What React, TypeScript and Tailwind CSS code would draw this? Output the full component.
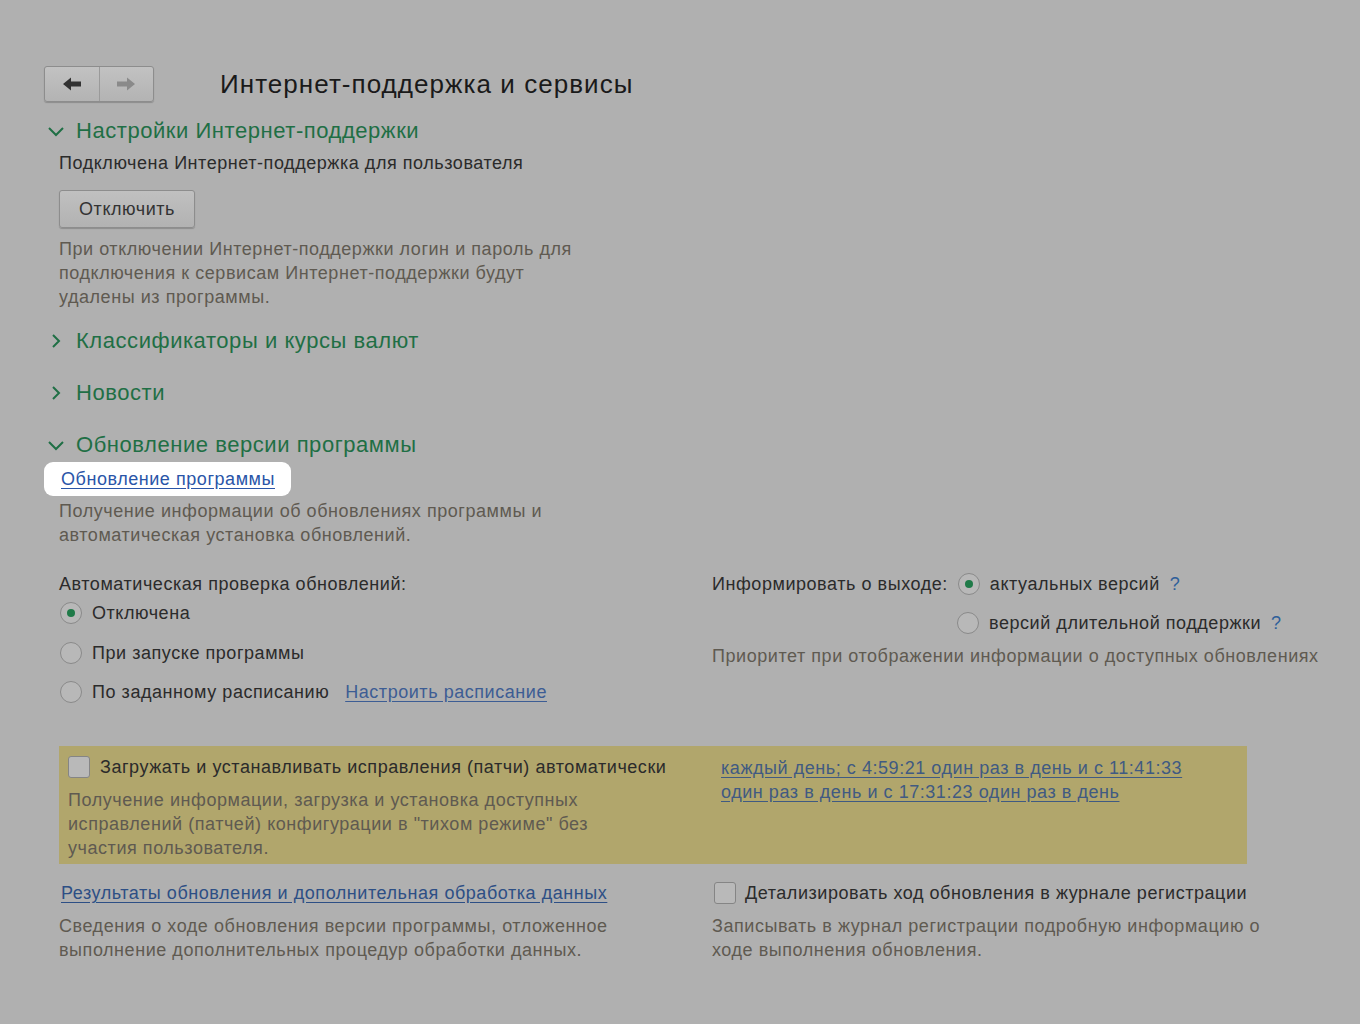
import React from "react";

const Radio = ({ checked }: { checked?: boolean }) => (
  <span className="inline-flex h-[22px] w-[22px] shrink-0 items-center justify-center rounded-full border border-[#8a8a8a] bg-[#b8b8b8]">
    {checked && <span className="h-[8px] w-[8px] rounded-full bg-[#1f7a48]" />}
  </span>
);

const Checkbox = () => (
  <span className="inline-block h-[22px] w-[22px] shrink-0 rounded-[3px] border border-[#858585] bg-[#b9b9b9]" />
);

const Chevron = ({ open }: { open: boolean }) => (
  <svg width="20" height="20" viewBox="0 0 20 20" className="shrink-0">
    {open ? (
      <path d="M3 7 L10 14 L17 7" fill="none" stroke="#1f6f45" strokeWidth="2" />
    ) : (
      <path d="M7 4 L13 10 L7 16" fill="none" stroke="#1f6f45" strokeWidth="2" />
    )}
  </svg>
);

export default function App() {
  return (
    <div
      className="min-h-[1024px] w-[1360px] bg-[#b0b0b0] text-[18px] tracking-[0.55px] text-[#2b2b2b]"
      style={{ fontFamily: '"Liberation Sans", Arial, sans-serif' }}
    >
      <div className="pl-[44px] pt-[66px]">
        {/* Header */}
        <div className="flex items-center">
          <div className="flex h-[36px] w-[110px] overflow-hidden rounded-[3px] border border-[#8d8d8d] bg-gradient-to-b from-[#c2c2c2] to-[#b3b3b3] shadow-[0_1px_1px_rgba(0,0,0,0.2)]">
            <div className="flex flex-1 items-center justify-center border-r border-[#9a9a9a]">
              <svg width="22" height="16" viewBox="0 0 22 16">
                <path d="M2 8 L10 1.5 L10 5.5 L20 5.5 L20 10.5 L10 10.5 L10 14.5 Z" fill="#333" />
              </svg>
            </div>
            <div className="flex flex-1 items-center justify-center">
              <svg width="22" height="16" viewBox="0 0 22 16">
                <path d="M20 8 L12 1.5 L12 5.5 L2 5.5 L2 10.5 L12 10.5 L12 14.5 Z" fill="#8a8a8a" />
              </svg>
            </div>
          </div>
          <h1 className="ml-[66px] text-[26px] leading-none tracking-[1.05px] text-[#1a1a1a]">Интернет-поддержка и сервисы</h1>
        </div>

        {/* Section 1 */}
        <div className="mt-[15px] flex items-center gap-[10px] pl-[2px]">
          <Chevron open />
          <span className="text-[22px] leading-[28px] text-[#1f6f45]">Настройки Интернет-поддержки</span>
        </div>
        <div className="pl-[15px]">
          <div className="mt-[6px] leading-[24px] text-[#2b2b2b]">Подключена Интернет-поддержка для пользователя</div>
          <button className="mt-[15px] flex h-[38px] w-[136px] items-center justify-center rounded-[3px] border border-[#8d8d8d] bg-gradient-to-b from-[#c0c0c0] to-[#b2b2b2] text-[18px] tracking-[0.55px] text-[#333] shadow-[0_1px_1px_rgba(0,0,0,0.2)]">
            Отключить
          </button>
          <div className="mt-[9px] w-[540px] leading-[24px] text-[#5f5a51]">
            При отключении Интернет-поддержки логин и пароль для подключения к сервисам Интернет-поддержки будут удалены из программы.
          </div>
        </div>

        {/* Section 2 */}
        <div className="mt-[18px] flex items-center gap-[10px] pl-[2px]">
          <Chevron open={false} />
          <span className="text-[22px] leading-[28px] text-[#1f6f45]">Классификаторы и курсы валют</span>
        </div>
        <div className="mt-[24px] flex items-center gap-[10px] pl-[2px]">
          <Chevron open={false} />
          <span className="text-[22px] leading-[28px] text-[#1f6f45]">Новости</span>
        </div>
        <div className="mt-[24px] flex items-center gap-[10px] pl-[2px]">
          <Chevron open />
          <span className="text-[22px] leading-[28px] text-[#1f6f45]">Обновление версии программы</span>
        </div>

        {/* Highlighted link */}
        <div className="mt-[3px] flex h-[34px] w-[247px] items-center rounded-[9px] bg-white pl-[17px]">
          <span className="text-[#2a55a8] underline underline-offset-[3px]">Обновление программы</span>
        </div>
        <div className="pl-[15px]">
          <div className="mt-[3px] w-[520px] leading-[24px] text-[#5f5a51]">
            Получение информации об обновлениях программы и автоматическая установка обновлений.
          </div>

          {/* Two columns */}
          <div className="mt-[25px] flex">
            <div className="w-[653px]">
              <div className="leading-[24px] text-[#2b2b2b]">Автоматическая проверка обновлений:</div>
              <div className="mt-[5px] flex items-center gap-[10px] pl-[1px]">
                <Radio checked />
                <span className="leading-[24px]">Отключена</span>
              </div>
              <div className="mt-[16px] flex items-center gap-[10px] pl-[1px]">
                <Radio />
                <span className="leading-[24px]">При запуске программы</span>
              </div>
              <div className="mt-[15px] flex items-center gap-[10px] pl-[1px]">
                <Radio />
                <span className="leading-[24px]">По заданному расписанию</span>
                <span className="ml-[6px] leading-[24px] text-[#3d5d94] underline underline-offset-[3px]">Настроить расписание</span>
              </div>
            </div>
            <div>
              <div className="flex items-center">
                <span className="leading-[24px]">Информировать о выходе:</span>
                <span className="ml-[10px] flex"><Radio checked /></span>
                <span className="ml-[10px] leading-[24px]">актуальных версий</span>
                <span className="ml-[10px] leading-[24px] text-[#2f5f9a]">?</span>
              </div>
              <div className="mt-[15px] flex items-center pl-[245px]">
                <Radio />
                <span className="ml-[10px] leading-[24px]">версий длительной поддержки</span>
                <span className="ml-[10px] leading-[24px] text-[#2f5f9a]">?</span>
              </div>
              <div className="mt-[9px] leading-[24px] text-[#5f5a51]">
                Приоритет при отображении информации о доступных обновлениях
              </div>
            </div>
          </div>

          {/* Yellow panel */}
          <div className="mt-[42px] flex h-[118px] w-[1188px] bg-[#b1a66c]">
            <div className="w-[662px] pl-[9px] pt-[9px]">
              <div className="flex items-center gap-[10px]">
                <Checkbox />
                <span className="leading-[24px]">Загружать и устанавливать исправления (патчи) автоматически</span>
              </div>
              <div className="mt-[9px] w-[540px] leading-[24px] text-[#5f5a51]">
                Получение информации, загрузка и установка доступных исправлений (патчей) конфигурации в "тихом режиме" без участия пользователя.
              </div>
            </div>
            <div className="pt-[10px] leading-[24px] text-[#405a82] underline underline-offset-[3px]">
              <div>каждый день; с 4:59:21 один раз в день и с 11:41:33</div>
              <div>один раз в день и с 17:31:23 один раз в день</div>
            </div>
          </div>

          {/* Bottom */}
          <div className="mt-[17px] flex">
            <div className="w-[653px]">
              <div className="pl-[2px] leading-[24px] text-[#2d4f85] underline underline-offset-[3px]">
                Результаты обновления и дополнительная обработка данных
              </div>
              <div className="mt-[9px] w-[580px] leading-[24px] text-[#5f5a51]">
                Сведения о ходе обновления версии программы, отложенное выполнение дополнительных процедур обработки данных.
              </div>
            </div>
            <div>
              <div className="flex items-center gap-[9px] pl-[2px]">
                <Checkbox />
                <span className="leading-[24px]">Детализировать ход обновления в журнале регистрации</span>
              </div>
              <div className="mt-[9px] w-[570px] leading-[24px] text-[#5f5a51]">
                Записывать в журнал регистрации подробную информацию о ходе выполнения обновления.
              </div>
            </div>
          </div>
        </div>
      </div>
    </div>
  );
}
